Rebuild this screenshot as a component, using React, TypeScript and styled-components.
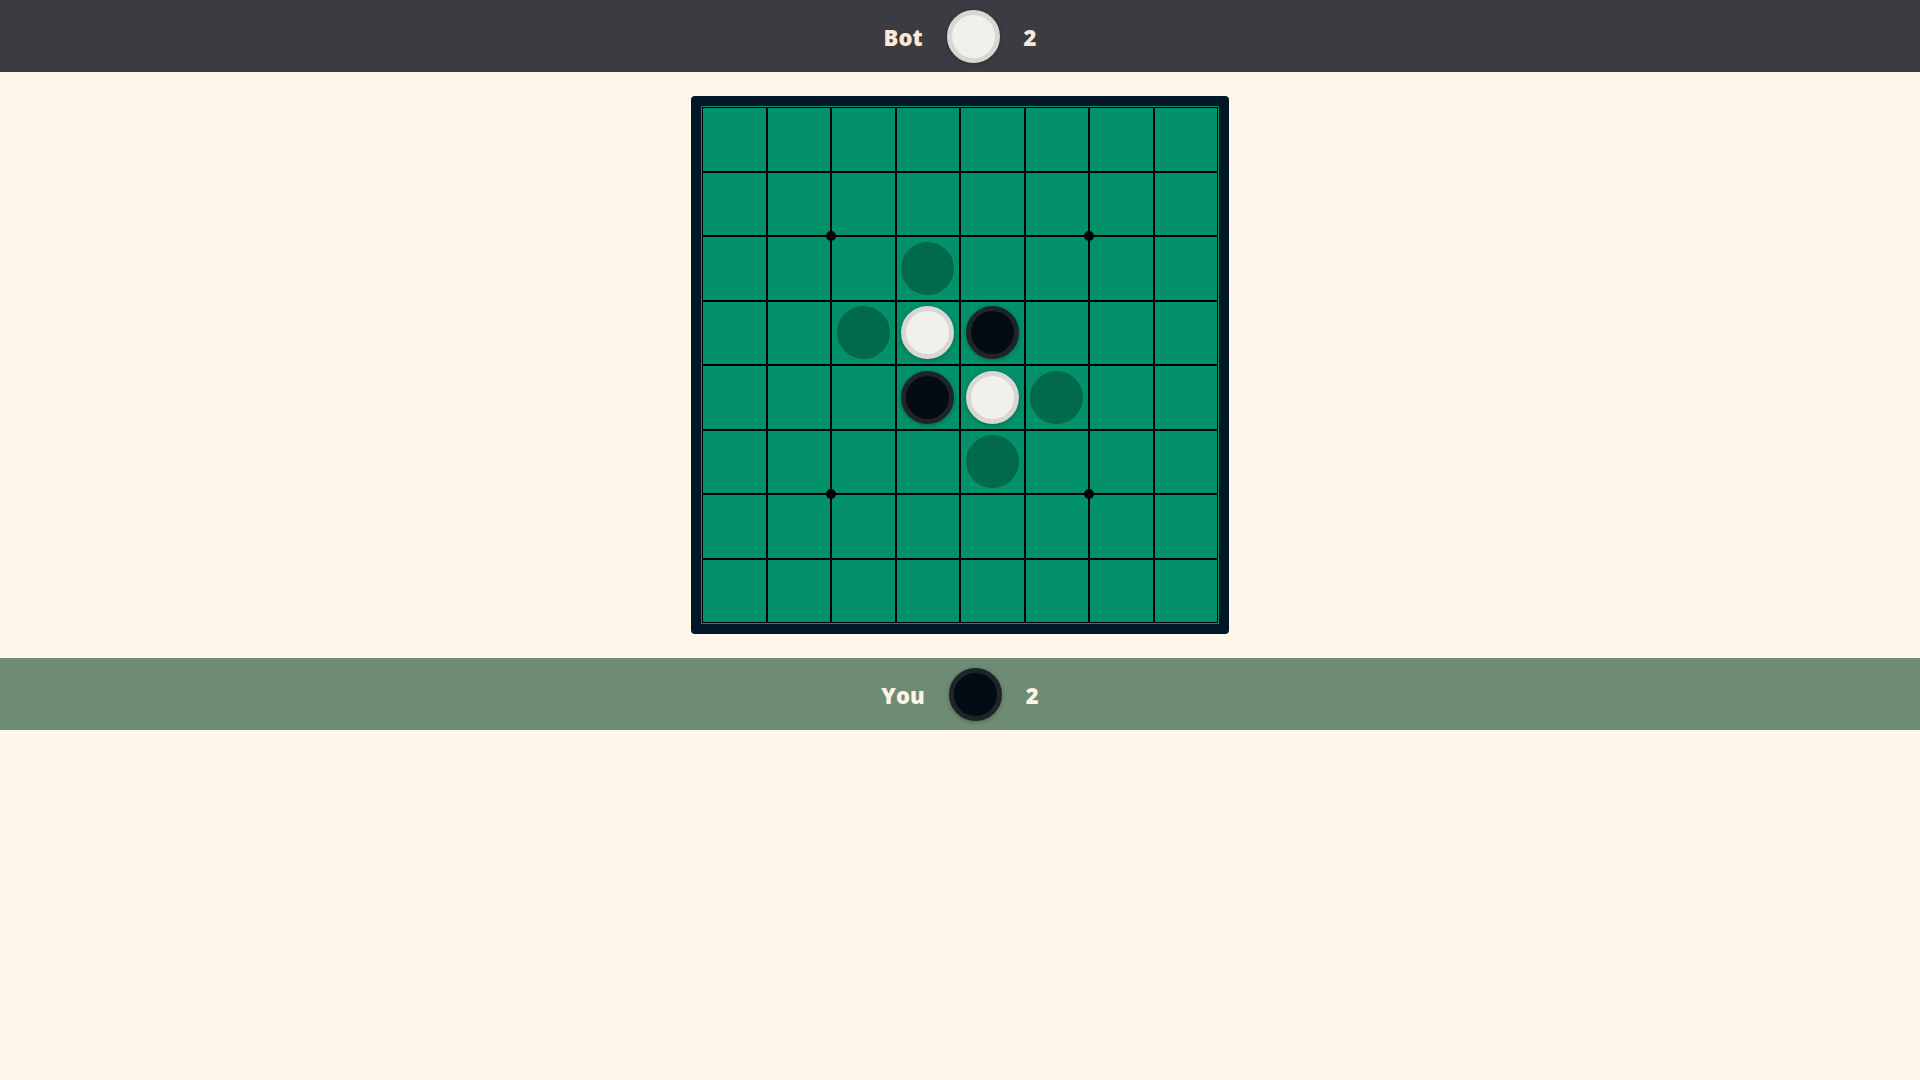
import React from "react";
import styled, { createGlobalStyle, css } from "styled-components";

const GlobalStyle = createGlobalStyle`
  html, body {
    margin: 0;
    padding: 0;
    background: #fff6ea;
  }
  body {
    font-family: "Open Sans", "Noto Sans", "Liberation Sans", sans-serif;
  }
  * { box-sizing: border-box; }
`;

const Page = styled.div`
  min-height: 100vh;
  background: #fff6ea;
  display: flex;
  flex-direction: column;
  align-items: stretch;
  gap: 24px;
`;

const PlayerBar = styled.div<{ $variant: "top" | "bottom" }>`
  height: 72px;
  display: flex;
  align-items: center;
  justify-content: center;
  gap: 24px;
  background: ${(p) => (p.$variant === "top" ? "#3c3b42" : "#6e8b74")};
  color: ${(p) => (p.$variant === "top" ? "#fbe8d6" : "#fdf4e4")};
  font-weight: 800;
  font-size: 22px;
`;

const Name = styled.span`
  display: block;
  line-height: 1;
  padding-top: 1px;
`;

const Score = styled.span`
  display: block;
  line-height: 1;
  padding-top: 1px;
  min-width: 12px;
`;

const discColors = {
  white: css`
    background: #f1f0ec;
    border-color: #d8d7d2;
  `,
  black: css`
    background: #030c14;
    border-color: #1f2428;
  `,
};

const Disc = styled.div<{ $color: "white" | "black" }>`
  width: 53px;
  height: 53px;
  border-radius: 50%;
  border: 5px solid;
  box-shadow: 0 1px 4px rgba(0, 0, 0, 0.28);
  ${(p) => discColors[p.$color]}
`;

const BoardRow = styled.div`
  display: flex;
  justify-content: center;
`;

const Frame = styled.div`
  width: 538px;
  padding: 10px;
  background: #011627;
  border-radius: 4px;
`;

const Felt = styled.div`
  padding: 1px;
  background: #02916a;
`;

const Grid = styled.div`
  position: relative;
  display: grid;
  grid-template-columns: repeat(8, 1fr);
  grid-template-rows: repeat(8, 64.5px);
  width: 516px;
`;

const Cell = styled.div`
  border: 1px solid #000;
  background: #02916a;
  display: flex;
  align-items: center;
  justify-content: center;
`;

const Hint = styled.div`
  width: 53px;
  height: 53px;
  border-radius: 50%;
  background: #006a4b;
`;

const StarPoint = styled.div`
  position: absolute;
  width: 10px;
  height: 10px;
  border-radius: 50%;
  background: #000;
  transform: translate(-50%, -50%);
`;

type Piece = "white" | "black" | "hint" | null;

const initial: Piece[][] = Array.from({ length: 8 }, () =>
  Array.from({ length: 8 }, () => null as Piece)
);
initial[3][3] = "white";
initial[4][4] = "white";
initial[3][4] = "black";
initial[4][3] = "black";
initial[2][3] = "hint";
initial[3][2] = "hint";
initial[4][5] = "hint";
initial[5][4] = "hint";

const stars = [
  [2, 2],
  [2, 6],
  [6, 2],
  [6, 6],
];

export default function App() {
  return (
    <>
      <GlobalStyle />
      <Page>
        <PlayerBar $variant="top">
          <Name>Bot</Name>
          <Disc $color="white" />
          <Score>2</Score>
        </PlayerBar>
        <BoardRow>
          <Frame>
            <Felt>
              <Grid>
                {initial.map((row, r) =>
                  row.map((p, c) => (
                    <Cell key={`${r}-${c}`}>
                      {p === "hint" && <Hint />}
                      {(p === "white" || p === "black") && <Disc $color={p} />}
                    </Cell>
                  ))
                )}
                {stars.map(([r, c]) => (
                  <StarPoint
                    key={`s${r}${c}`}
                    style={{ top: `${(r / 8) * 100}%`, left: `${(c / 8) * 100}%` }}
                  />
                ))}
              </Grid>
            </Felt>
          </Frame>
        </BoardRow>
        <PlayerBar $variant="bottom">
          <Name>You</Name>
          <Disc $color="black" />
          <Score>2</Score>
        </PlayerBar>
      </Page>
    </>
  );
}
